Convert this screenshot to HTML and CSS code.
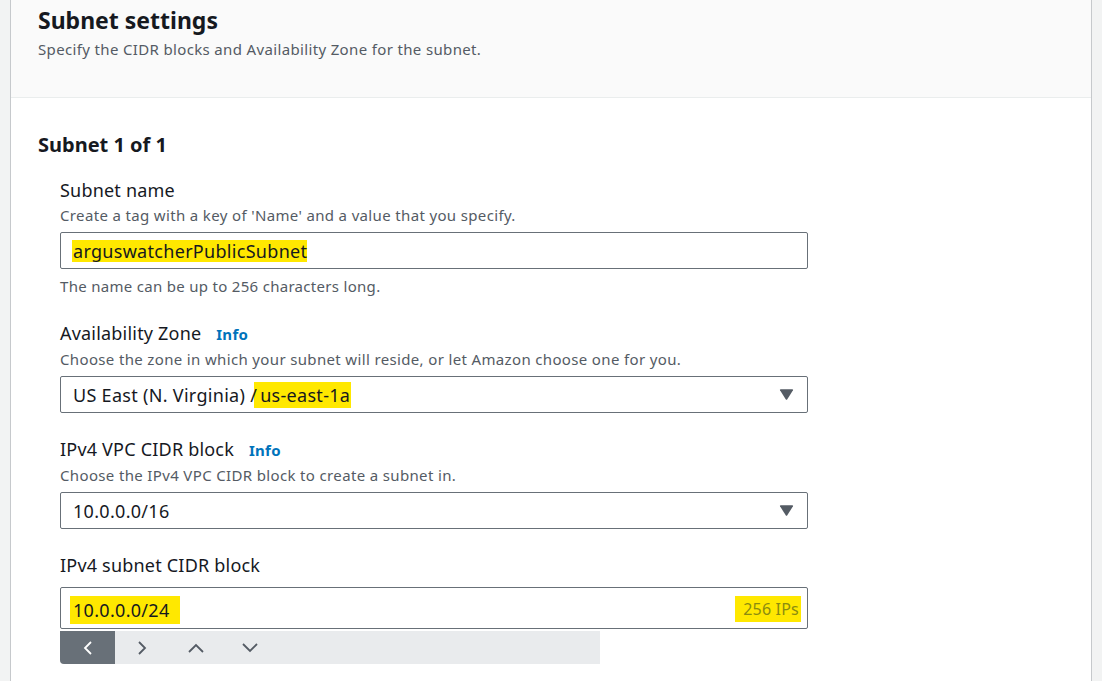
FILE: index.html
```html
<!DOCTYPE html>
<html lang="en">
<head>
<meta charset="utf-8">
<title>Subnet settings</title>
<link rel="stylesheet" href="styles.css">
</head>
<body>
<div class="page">
  <section class="panel">
    <header class="panel-header">
      <h2 class="panel-title">Subnet settings</h2>
      <p class="panel-desc">Specify the CIDR blocks and Availability Zone for the subnet.</p>
    </header>
    <div class="panel-body">
      <h3 class="subnet-title">Subnet 1 of 1</h3>

      <div class="field">
        <div class="label">Subnet name</div>
        <div class="desc">Create a tag with a key of 'Name' and a value that you specify.</div>
        <div class="input"><span class="hl hl-name">arguswatcherPublicSubnet</span></div>
        <div class="hint">The name can be up to 256 characters long.</div>
      </div>

      <div class="field">
        <div class="label">Availability Zone <a class="info">Info</a></div>
        <div class="desc">Choose the zone in which your subnet will reside, or let Amazon choose one for you.</div>
        <div class="input select">
          <span class="value">US East (N. Virginia) <span class="slash">/</span> <span class="hl hl-az">us-east-1a</span></span>
          <svg class="caret" width="15" height="11" viewBox="0 0 15 11"><path d="M1 1.2 Q0.6 0.2 1.8 0.2 H13.2 Q14.4 0.2 14 1.2 L8.3 10.2 Q7.5 11.2 6.7 10.2 Z" fill="#545b64"/></svg>
        </div>
      </div>

      <div class="field field-vpc">
        <div class="label">IPv4 VPC CIDR block <a class="info">Info</a></div>
        <div class="desc">Choose the IPv4 VPC CIDR block to create a subnet in.</div>
        <div class="input select">
          <span class="value">10.0.0.0/16</span>
          <svg class="caret" width="15" height="11" viewBox="0 0 15 11"><path d="M1 1.2 Q0.6 0.2 1.8 0.2 H13.2 Q14.4 0.2 14 1.2 L8.3 10.2 Q7.5 11.2 6.7 10.2 Z" fill="#545b64"/></svg>
        </div>
      </div>

      <div class="field field-last">
        <div class="label">IPv4 subnet CIDR block</div>
        <div class="input input-tall">
          <span class="hl hl-cidr">10.0.0.0/24</span>
          <span class="hl hl-ips">256 IPs</span>
        </div>
        <div class="toolbar">
          <button class="tb-btn active" aria-label="Previous">
            <svg width="10" height="14" viewBox="0 0 10 14"><path d="M8 1 L2 7 L8 13" fill="none" stroke="#fff" stroke-width="1.8"/></svg>
          </button>
          <button class="tb-btn" aria-label="Next">
            <svg width="10" height="14" viewBox="0 0 10 14"><path d="M2 1 L8 7 L2 13" fill="none" stroke="#545b64" stroke-width="1.8"/></svg>
          </button>
          <button class="tb-btn" aria-label="Up">
            <svg width="16" height="10" viewBox="0 0 16 10"><path d="M1 9 L8 2 L15 9" fill="none" stroke="#545b64" stroke-width="1.8"/></svg>
          </button>
          <button class="tb-btn" aria-label="Down">
            <svg width="16" height="10" viewBox="0 0 16 10"><path d="M1 1 L8 8 L15 1" fill="none" stroke="#545b64" stroke-width="1.8"/></svg>
          </button>
        </div>
      </div>
    </div>
  </section>
</div>
</body>
</html>
```

FILE: styles.css
```css
* { box-sizing: border-box; }

html, body {
  margin: 0;
  padding: 0;
  height: 100%;
  overflow: hidden;
}

body {
  background: #f2f3f3;
  font-family: "Noto Sans", "Open Sans", sans-serif;
  color: #16191f;
}

.page {
  padding: 0 10px;
  height: 100%;
}

.panel {
  background: #ffffff;
  border-left: 1px solid #c6c9cc;
  border-right: 1px solid #c6c9cc;
  height: 100%;
}

.panel-header {
  background: #fafafa;
  border-bottom: 1px solid #eaeded;
  height: 98px;
  padding: 6px 27px 0;
}

.panel-title {
  margin: 0;
  font-size: 23px;
  line-height: 28px;
  font-weight: 700;
  color: #16191f;
}

.panel-desc {
  margin: 5px 0 0;
  font-size: 15px;
  line-height: 20px;
  letter-spacing: 0.35px;
  color: #545b64;
}

.panel-body {
  padding: 35px 27px 0;
}

.subnet-title {
  margin: 0;
  font-size: 20px;
  line-height: 24px;
  font-weight: 700;
}

.field {
  margin: 21px 0 0 22px;
  width: 748px;
}

.field + .field {
  margin-top: 25px;
}

.field.field-vpc {
  margin-top: 24px;
}

.field.field-last {
  margin-top: 24px;
}

.label {
  font-size: 18px;
  line-height: 24px;
  letter-spacing: 0.2px;
  color: #16191f;
}

.info {
  font-size: 15px;
  font-weight: 700;
  letter-spacing: 0.3px;
  color: #0073bb;
  margin-left: 10px;
}

.desc {
  margin-top: 3px;
  font-size: 15px;
  line-height: 20px;
  letter-spacing: 0.35px;
  color: #545b64;
}

.input {
  margin-top: 7px;
  height: 37px;
  border: 1px solid #687078;
  border-radius: 2px;
  display: flex;
  align-items: center;
  padding: 0 13px 0 12px;
  font-size: 18px;
  letter-spacing: 0.3px;
  color: #16191f;
}

.select {
  justify-content: space-between;
}

.hint {
  margin-top: 7px;
  font-size: 15px;
  line-height: 20px;
  letter-spacing: 0.3px;
  color: #545b64;
}

.hl {
  background: #ffe800;
}

.hl-name {
  line-height: 22px;
  padding: 0 0 0 1px;
  margin-left: -1px;
}

.slash {
  position: relative;
  z-index: 1;
}

.hl-az {
  display: inline-block;
  line-height: 26px;
  padding: 0 1px 0 6px;
  margin-left: -8px;
}

.input-tall {
  margin-top: 10px;
  height: 42px;
  justify-content: space-between;
  padding: 0 6px 0 9px;
}

.hl-cidr {
  line-height: 28px;
  padding: 0 10px 0 3px;
  margin-top: 4px;
}

.hl-ips {
  line-height: 26px;
  padding: 0 2px 0 8px;
  font-size: 16px;
  letter-spacing: 0.2px;
  color: #8a8c10;
  margin-top: 2px;
}

.toolbar {
  margin-top: 2px;
  width: 540px;
  height: 33px;
  background: #e9ebed;
  border-radius: 0 0 0 4px;
  display: flex;
}

.tb-btn {
  width: 54px;
  height: 33px;
  border: 0;
  padding: 0;
  background: transparent;
  display: flex;
  align-items: center;
  justify-content: center;
}

.tb-btn.active {
  background: #687078;
  border-radius: 0 0 0 4px;
  width: 55px;
}
```
